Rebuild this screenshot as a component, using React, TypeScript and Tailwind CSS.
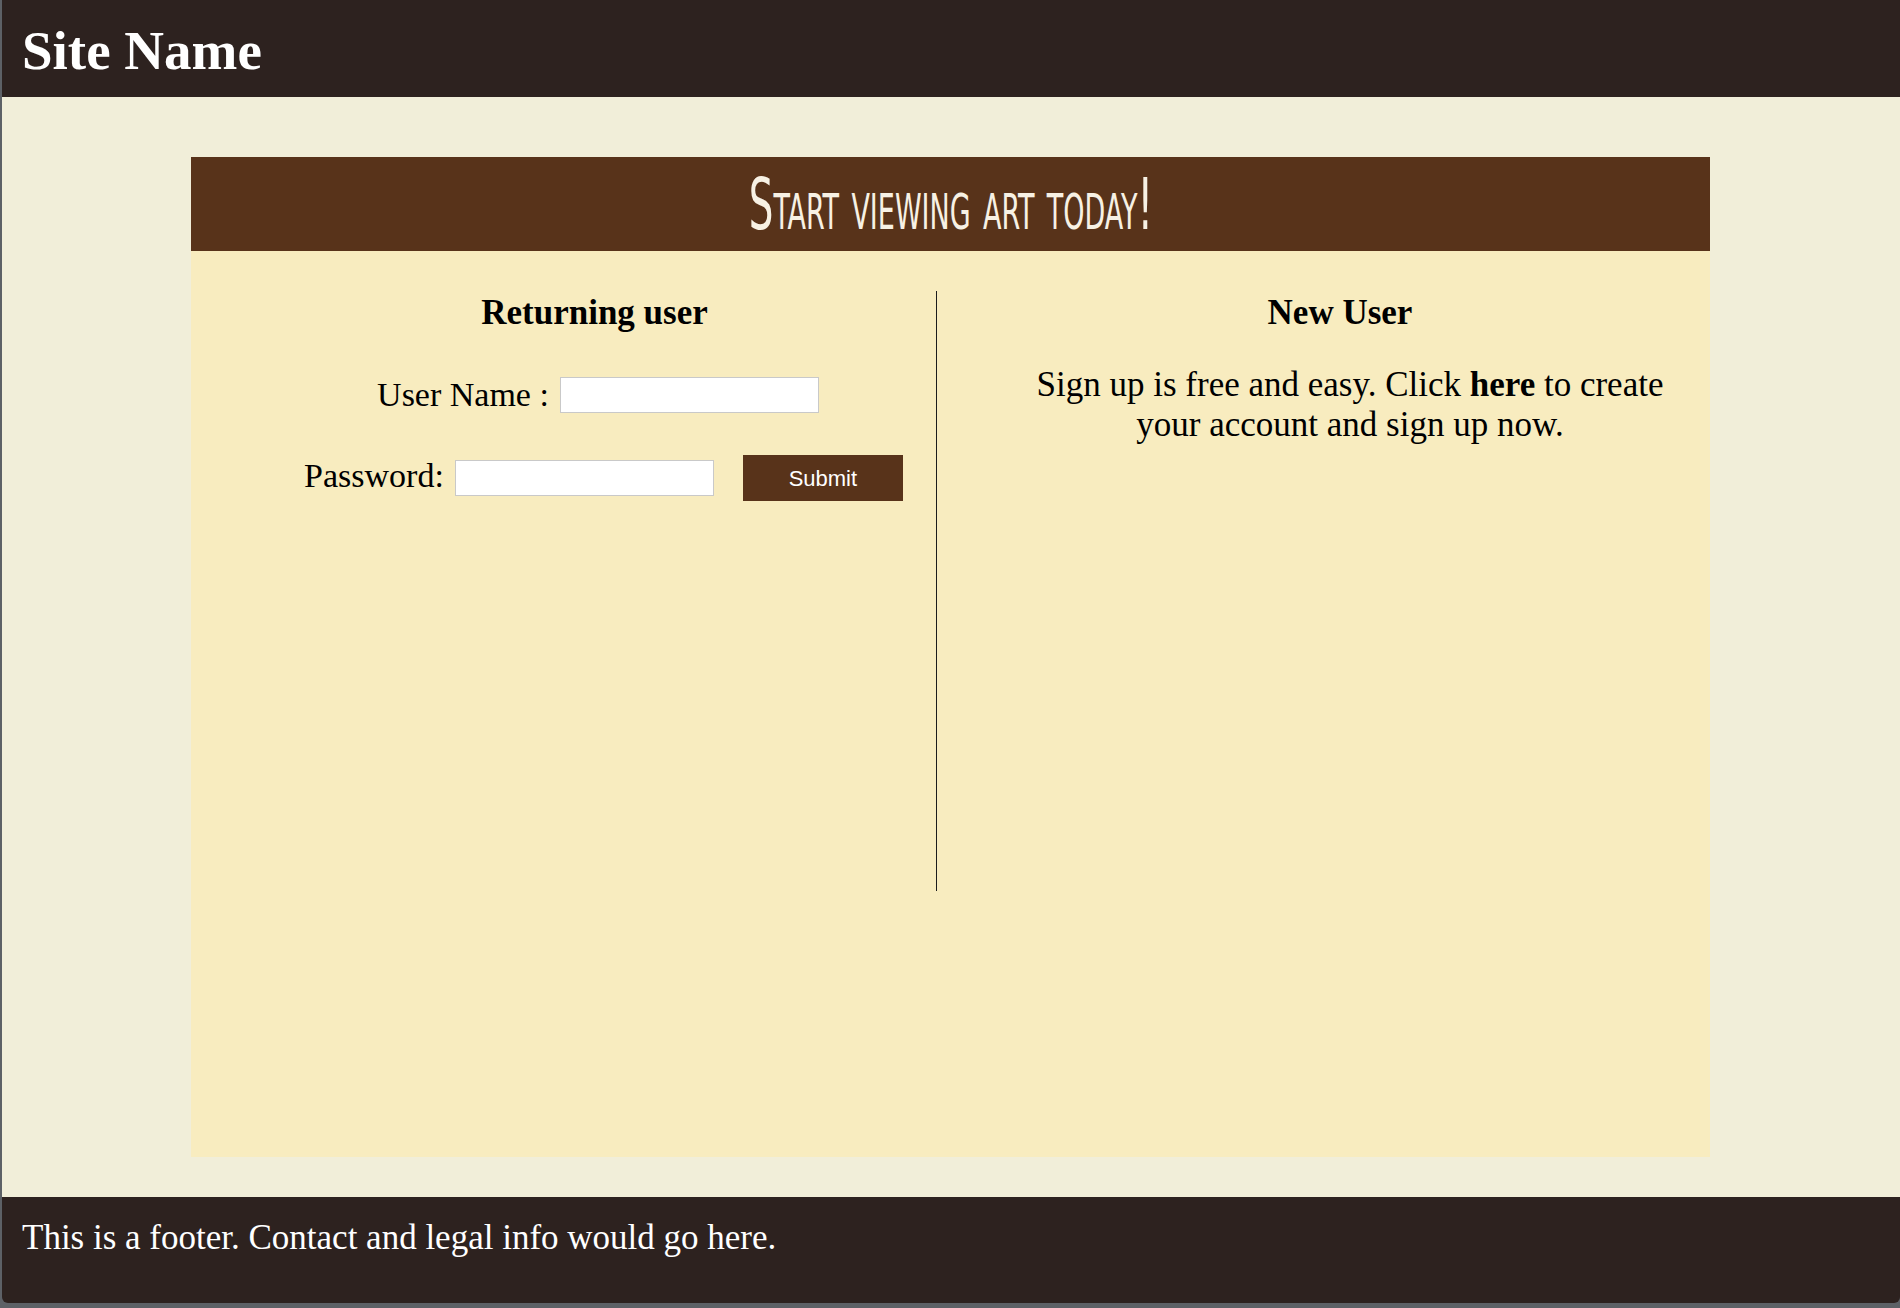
import React from "react";

const serif = "font-['Liberation_Serif','Times_New_Roman',serif]";

const App = () => {
  return (
    <div className="w-[1900px] h-[1308px] bg-[#5d6166] pl-[2px] overflow-hidden">
      <div className="flex flex-col rounded-b-[6px] overflow-hidden">
        {/* Header */}
        <header className="h-[97px] bg-[#2d221f] pl-[20px] pt-[23px]">
          <h1 className={`${serif} text-[55px] leading-[55px] font-bold text-white`}>Site Name</h1>
        </header>

        {/* Main */}
        <main className="h-[1100px] bg-[#f1eed9] pt-[60px]">
          <div className="w-[1519px] ml-[189px]">
            <div className="h-[94px] bg-[#58331a] flex justify-center pt-[11px]">
              <span className="inline-block scale-x-[0.6] font-['Liberation_Sans_Narrow','DejaVu_Sans_Condensed',sans-serif] text-[72px] leading-[72px] text-[#f7f1e4] [font-variant:small-caps]">
                Start viewing art today!
              </span>
            </div>

            <div className={`${serif} h-[906px] bg-[#f8ecbf] flex pt-[40px] text-black`}>
              {/* Returning user */}
              <div className="w-[746px] shrink-0 h-[600px] border-r border-[#1c1c1c] pl-[69px] flex flex-col items-center">
                <h2 className="mt-[2px] text-[35px] leading-[40px] font-bold pr-[7px]">Returning user</h2>
                <div className="mt-[39px] flex items-start">
                  <label className="mt-[3px] text-[34px] leading-[40px]">User Name :</label>
                  <input
                    type="text"
                    className="ml-[11px] mt-[5px] w-[259px] h-[36px] bg-white border border-[#c9c9c9] outline-none"
                  />
                </div>
                <div className="mt-[40px] flex items-start pl-[11px]">
                  <label className="mt-[1px] text-[34px] leading-[40px]">Password:</label>
                  <input
                    type="password"
                    className="ml-[11px] mt-[5px] w-[259px] h-[36px] bg-white border border-[#c9c9c9] outline-none"
                  />
                  <button className="ml-[29px] w-[160px] h-[46px] bg-[#58331a] text-white font-['Liberation_Sans',Arial,sans-serif] text-[22px]">
                    Submit
                  </button>
                </div>
              </div>

              {/* New user */}
              <div className="flex-1 flex flex-col items-center pl-[78px] pr-[25px]">
                <h2 className="mt-[2px] text-[35px] leading-[40px] font-bold pr-[20px]">New User</h2>
                <p className="mt-[32px] w-[670px] text-center text-[35px] leading-[40px]">
                  Sign up is free and easy. Click <b>here</b> to create your account and sign up now.
                </p>
              </div>
            </div>
          </div>
        </main>

        {/* Footer */}
        <footer className="h-[106px] bg-[#2d221f] pl-[20px] pt-[21px]">
          <p className={`${serif} text-[35px] leading-[40px] text-white`}>
            This is a footer. Contact and legal info would go here.
          </p>
        </footer>
      </div>
    </div>
  );
};

export default App;
